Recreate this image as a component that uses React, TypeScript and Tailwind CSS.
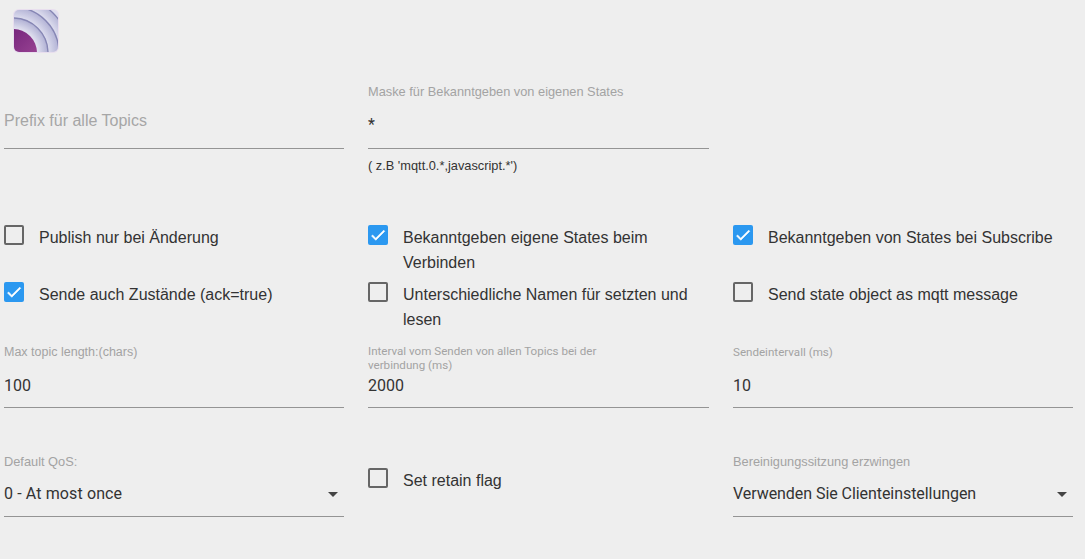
import React from 'react';

const Logo: React.FC = () => (
  <svg width="46" height="44" viewBox="0 0 46 44" className="block">
    <defs>
      <radialGradient id="bands" gradientUnits="userSpaceOnUse" cx="0" cy="44" r="60">
        <stop offset="0.4" stopColor="#e2e2f0" />
        <stop offset="0.57" stopColor="#b4b4d6" />
        <stop offset="0.6" stopColor="#d9d9ec" />
        <stop offset="0.76" stopColor="#b4b4d6" />
        <stop offset="0.79" stopColor="#dadaec" />
        <stop offset="0.93" stopColor="#b8b8d8" />
        <stop offset="0.96" stopColor="#dedeef" />
      </radialGradient>
      <linearGradient id="core" x1="0" y1="0" x2="1" y2="1">
        <stop offset="0" stopColor="#661872" />
        <stop offset="1" stopColor="#a8509c" />
      </linearGradient>
      <clipPath id="clip">
        <rect x="1" y="1" width="44" height="42" rx="5" />
      </clipPath>
    </defs>
    <rect x="0" y="0" width="46" height="44" rx="6" fill="#e8deee" />
    <g clipPath="url(#clip)">
      <rect x="0" y="0" width="46" height="44" fill="url(#bands)" />
      <circle cx="0" cy="44" r="35" fill="none" stroke="#8686b4" strokeWidth="1.3" />
      <circle cx="0" cy="44" r="46" fill="none" stroke="#8686b4" strokeWidth="1.3" />
      <circle cx="0" cy="44" r="56.5" fill="none" stroke="#8686b4" strokeWidth="1.3" />
      <circle cx="0" cy="44" r="24" fill="url(#core)" />
    </g>
  </svg>
);

const Field: React.FC<{
  label?: string;
  labelClass?: string;
  value?: string;
  placeholder?: string;
  helper?: string;
  select?: boolean;
  valueClass?: string;
  textClass?: string;
}> = ({ label, labelClass, value, placeholder, helper, select, valueClass, textClass }) => (
  <div>
    <div className="h-[72px] flex flex-col justify-end border-b border-[#949494]">
      {label && <div className={`leading-[14px] text-[#a3a3a3] w-[260px] ${labelClass}`}>{label}</div>}
      <div className={`flex items-start justify-between ${valueClass}`}>
        {placeholder && <span className="font-['Liberation_Sans',sans-serif] text-base leading-[19px] text-[#a6a6a6]">{placeholder}</span>}
        {value && <span className={`text-base leading-[19px] text-[#333] ${textClass}`}>{value}</span>}
        {select && (
          <svg width="24" height="24" viewBox="0 0 24 24" className="mr-[-1px] mt-[-2px]">
            <path d="M7 10l5 5 5-5z" fill="#444" />
          </svg>
        )}
      </div>
    </div>
    {helper && <div className="font-['Liberation_Sans',sans-serif] text-[12.8px] leading-[14px] text-[#333] mt-[10px]">{helper}</div>}
  </div>
);

const Check: React.FC<{ label: string; checked?: boolean }> = ({ label, checked }) => (
  <div className="flex items-start">
    {checked ? (
      <div className="w-5 h-5 shrink-0 rounded-[2px] bg-[#2b98f0] flex items-center justify-center">
        <svg width="18" height="18" viewBox="0 0 24 24">
          <path d="M9 16.2 4.8 12l-1.4 1.4L9 19 21 7l-1.4-1.4z" fill="#fff" stroke="#fff" strokeWidth="0.8" />
        </svg>
      </div>
    ) : (
      <div className="w-5 h-5 shrink-0 rounded-[2px] border-2 border-[#666]" />
    )}
    <span className="ml-[15px] font-['Liberation_Sans',sans-serif] text-base leading-[25px] text-[#333]">{label}</span>
  </div>
);

export default function App() {
  return (
    <div className="w-[1085px] h-[559px] overflow-hidden bg-[#eeeeee] font-['Roboto',sans-serif]">
      <div className="pt-[9px] pl-[13px] h-[77px]">
        <Logo />
      </div>
      <div className="pl-[4px] pr-[12px] grid grid-cols-[340px_341px_340px] gap-x-[24px]">
        <Field placeholder="Prefix für alle Topics" valueClass="h-[37px]" />
        <Field
          label="Maske für Bekanntgeben von eigenen States"
          labelClass="font-['Liberation_Sans',sans-serif] text-[12.8px] mb-[16px] whitespace-nowrap"
          value="*"
          valueClass="h-[33px]"
          helper="( z.B 'mqtt.0.*,javascript.*')"
        />
        <div />
      </div>
      <div className="pl-[4px] pr-[12px] mt-[52px] grid grid-cols-[340px_341px_340px] gap-x-[24px] gap-y-[7px]">
        <Check label="Publish nur bei Änderung" />
        <Check label="Bekanntgeben eigene States beim Verbinden" checked />
        <Check label="Bekanntgeben von States bei Subscribe" checked />
        <Check label="Sende auch Zustände (ack=true)" checked />
        <Check label="Unterschiedliche Namen für setzten und lesen" />
        <Check label="Send state object as mqtt message" />
      </div>
      <div className="pl-[4px] pr-[12px] mt-[4px] grid grid-cols-[340px_341px_340px] gap-x-[24px]">
        <Field label="Max topic length:(chars)" labelClass="font-['Liberation_Sans',sans-serif] text-[12.5px] mb-[17px]" value="100" valueClass="h-[31px]" />
        <Field label="Interval vom Senden von allen Topics bei der verbindung (ms)" labelClass="text-[11.6px] mb-[4px]" value="2000" valueClass="h-[31px]" />
        <Field label="Sendeintervall (ms)" labelClass="text-[11.6px] mb-[17px]" value="10" valueClass="h-[31px]" />
      </div>
      <div className="pl-[4px] pr-[12px] mt-[37px] grid grid-cols-[340px_341px_340px] gap-x-[24px]">
        <Field
          label="Default QoS:"
          labelClass="font-['Liberation_Sans',sans-serif] text-[12.8px] mb-[15px]"
          value="0 - At most once"
          valueClass="h-[32px]"
          textClass="tracking-[0.12px]"
          select
        />
        <div className="pt-[23px]">
          <Check label="Set retain flag" />
        </div>
        <Field
          label="Bereinigungssitzung erzwingen"
          labelClass="font-['Liberation_Sans',sans-serif] text-[12.8px] mb-[15px]"
          value="Verwenden Sie Clienteinstellungen"
          valueClass="h-[32px]"
          textClass="tracking-[-0.06px]"
          select
        />
      </div>
    </div>
  );
}
